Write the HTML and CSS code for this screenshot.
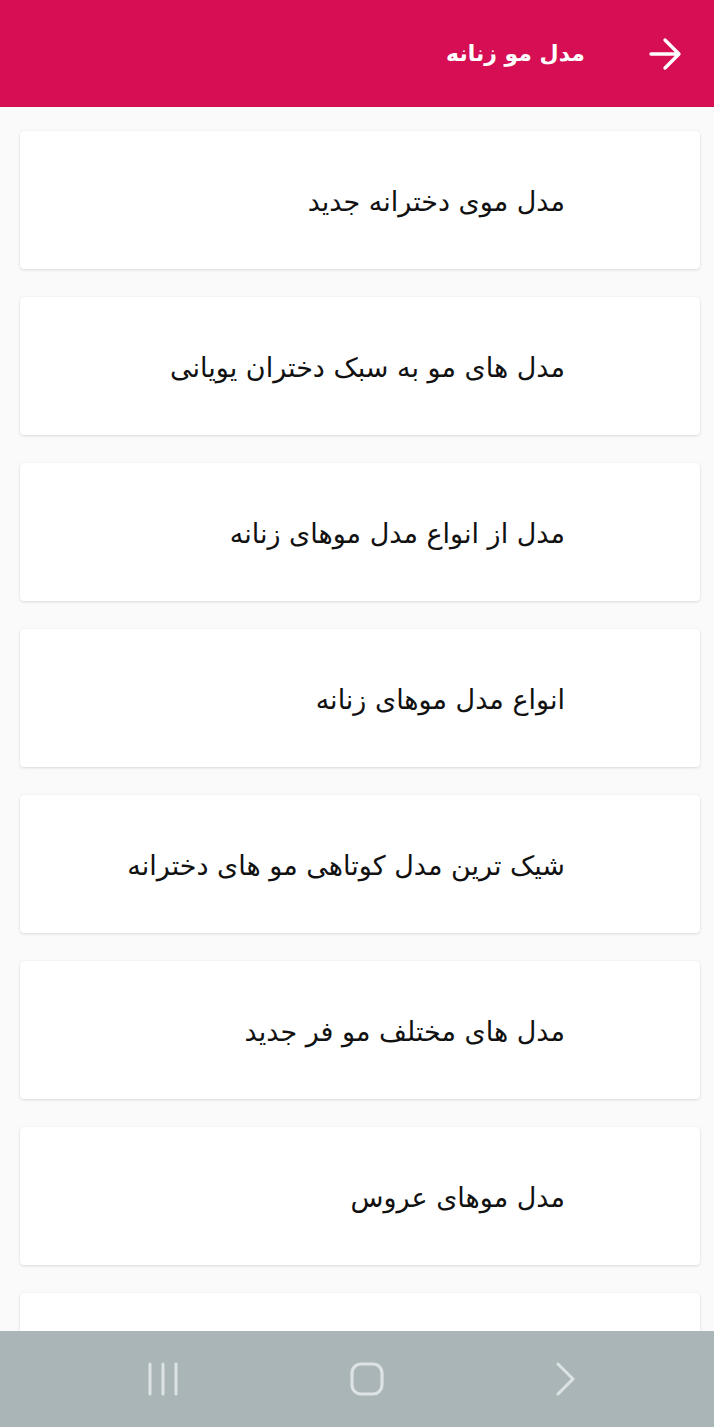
FILE: index.html
```html
<!DOCTYPE html>
<html lang="fa" dir="rtl">
<head>
<meta charset="utf-8">
<link rel="stylesheet" href="styles.css">
</head>
<body>
<header class="appbar">
  <svg class="back" viewBox="0 0 34 34" width="34" height="34"><path d="M3 17H31M17 3L31 17L17 31" fill="none" stroke="#fff" stroke-width="3.4" stroke-linecap="round" stroke-linejoin="round"/></svg>
  <h1 class="title">مدل مو زنانه</h1>
</header>
<main class="list">
  <div class="card"><span>مدل موی دخترانه جدید</span></div>
  <div class="card"><span>مدل های مو به سبک دختران یویانی</span></div>
  <div class="card"><span>مدل از انواع مدل موهای زنانه</span></div>
  <div class="card"><span>انواع مدل موهای زنانه</span></div>
  <div class="card"><span>شیک ترین مدل کوتاهی مو های دخترانه</span></div>
  <div class="card"><span>مدل های مختلف مو فر جدید</span></div>
  <div class="card"><span>مدل موهای عروس</span></div>
  <div class="card"><span></span></div>
</main>
<nav class="navbar">
  <svg viewBox="0 0 32 34" width="32" height="34"><path d="M3 2V32M16 2V32M29 2V32" stroke="#dde3e4" stroke-width="3" stroke-linecap="round"/></svg>
  <svg viewBox="0 0 34 34" width="34" height="34"><rect x="2" y="2" width="30" height="30" rx="9" fill="none" stroke="#dde3e4" stroke-width="3.2"/></svg>
  <svg viewBox="0 0 22 34" width="22" height="34"><path d="M3 2L18 17L3 32" fill="none" stroke="#dde3e4" stroke-width="3" stroke-linecap="round" stroke-linejoin="round"/></svg>
</nav>
</body>
</html>
```
FILE: styles.css
```css
html, body {
  margin: 0;
  padding: 0;
}
body {
  width: 714px;
  height: 1427px;
  overflow: hidden;
  background: #fafafa;
  font-family: "DejaVu Sans", "Noto Sans", sans-serif;
  position: relative;
}
.appbar {
  height: 107px;
  background: #d60e53;
  display: flex;
  align-items: center;
  padding-right: 32px;
  box-sizing: border-box;
  gap: 63px;
}
.back {
  display: block;
}
.title {
  margin: 0;
  color: #fff;
  font-size: 22px;
  font-weight: bold;
  line-height: 1;
}
.list {
  display: flex;
  flex-direction: column;
  gap: 28px;
  padding: 24px 14px 0 20px;
}
.card {
  height: 138px;
  background: #fff;
  border-radius: 4px;
  box-shadow: 0 1px 3px rgba(0,0,0,0.12), 0 0 1px rgba(0,0,0,0.08);
  display: flex;
  align-items: center;
  padding-right: 135px;
  box-sizing: border-box;
}
.card span {
  font-size: 27px;
  color: #111;
  padding-top: 2px;
}
.navbar {
  position: absolute;
  left: 0;
  right: 0;
  bottom: 0;
  height: 96px;
  background: #a9b5b6;
  display: flex;
  direction: ltr;
  align-items: center;
  justify-content: space-between;
  padding: 0 137px 0 147px;
  box-sizing: border-box;
}
.navbar svg {
  display: block;
}
```
